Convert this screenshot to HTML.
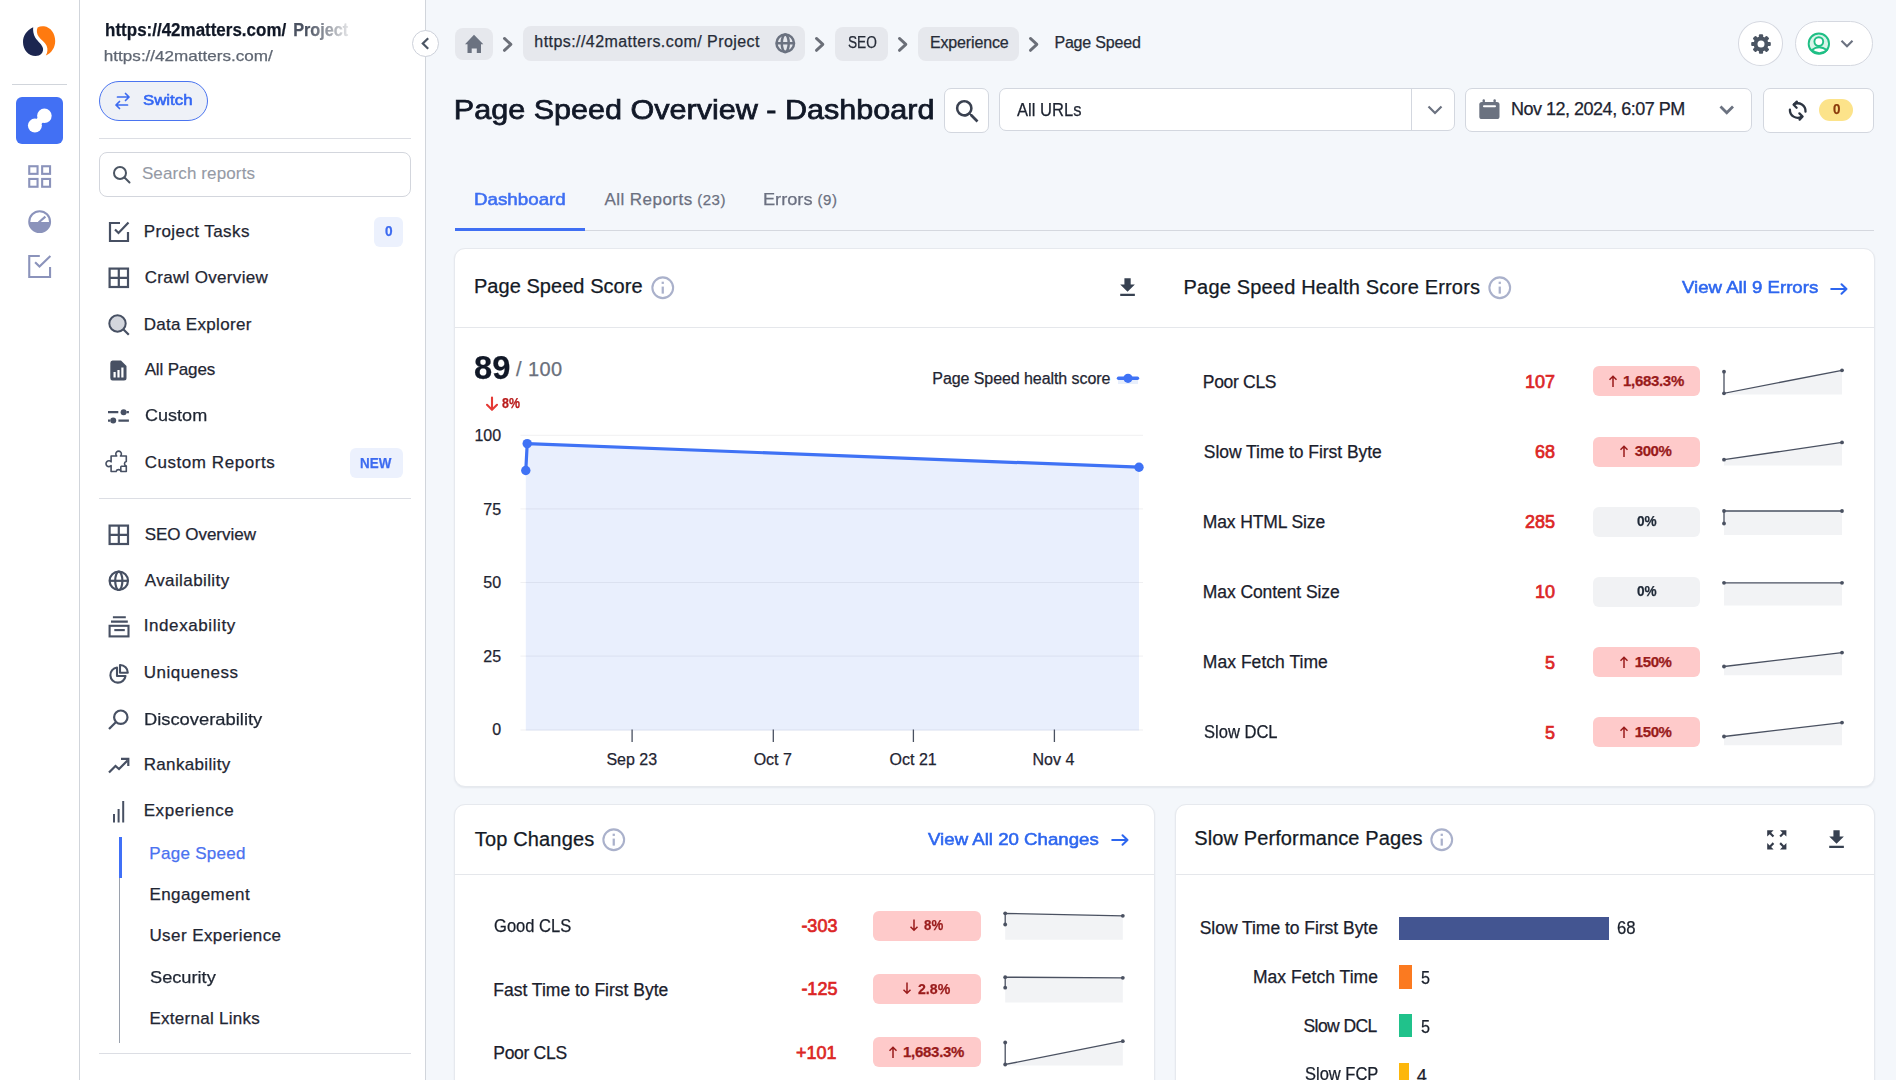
<!DOCTYPE html>
<html><head><meta charset="utf-8"><title>Page Speed Overview - Dashboard</title><style>
*{box-sizing:border-box;margin:0;padding:0}
html,body{width:1896px;height:1080px;overflow:hidden}
body{font-family:"Liberation Sans",sans-serif;background:#f4f7fb;color:#1d2433;position:relative}
.abs{position:absolute}
.ico{position:absolute;overflow:visible}
.t{position:absolute;white-space:nowrap;line-height:1;-webkit-text-stroke:0.25px currentColor}
.hr{position:absolute;height:1px;background:#dfe1e7}
.card{position:absolute;background:#fff;border:1px solid #e6e9ee;border-radius:11px;box-shadow:0 1px 2px rgba(20,30,50,.07)}
.chip{position:absolute;background:#e6e8ed;border-radius:8px}
.box{position:absolute;background:#fff;border:1px solid #d3d7df;border-radius:7px}
</style></head><body>
<div class="abs" style="left:0;top:0;width:80px;height:1080px;background:#fff;border-right:1px solid #d1d5db"></div>
<svg class="ico" style="left:0;top:0" width="80" height="80" viewBox="0 0 80 80">
  <path d="M33.2 27.3 C26.5 30.5 23 36 23 42 C23 50 28.5 56 35.5 56 C40.5 56 43.6 52.5 43 48.5 C42.4 44.5 37.6 41.5 35.2 37.5 C33.4 34.3 32.8 30.5 33.2 27.3Z" fill="#1c2650"/>
  <path d="M37.6 27.4 C39.6 26.3 41.8 26 44 26.3 C50.8 27.3 55.2 33.5 55.2 41 C55.2 47.6 51.4 53.2 45.8 55.6 C47.6 52.6 48 49 46.6 45.8 C45 42.4 41 40 38.6 36.6 C36.8 33.8 36.2 30 37.6 27.4Z" fill="#ff7a0f"/>
</svg>
<div class="hr" style="left:12px;top:84px;width:55px;background:#d1d5db"></div>
<div class="abs" style="left:16px;top:97px;width:47px;height:47px;border-radius:6px;background:#4270f4"></div>
<svg class="ico" style="left:0;top:0" width="80" height="160" viewBox="0 0 80 160">
  <circle cx="34.9" cy="125.6" r="7" fill="#fff"/><circle cx="44.4" cy="115.8" r="7.3" fill="#fff"/>
  <path d="M32.4 123.2 L41.9 113.4 L46.9 118.2 L37.4 128Z" fill="#fff"/>
</svg>
<svg class="ico" style="left:0;top:0" width="80" height="300" viewBox="0 0 80 300" fill="none" stroke="#8b93bb" stroke-width="2.1">
  <rect x="29.25" y="166.25" width="8.3" height="7.6"/><rect x="42.15" y="166.25" width="7.9" height="7.6"/>
  <rect x="29.25" y="178.95" width="8.3" height="7.8"/><rect x="42.15" y="178.95" width="7.9" height="7.8"/>
  <circle cx="39.65" cy="221.65" r="10.4"/>
  <path d="M29.2 221.9 A10.45 10.45 0 0 0 50.1 221.9Z" fill="#8b93bb" stroke="none"/>
  <path d="M38.6 222.5 L45.4 216.6"/>
  <path d="M39.8 256.05 H29.25 V277.05 H50.05 V267"/><path d="M35.1 262.2 L39.5 266.6 L50.4 256"/>
</svg>
<div class="abs" style="left:80px;top:0;width:346px;height:1080px;background:#fff;border-right:1px solid #d1d5db"></div>
<div class="abs" style="left:99px;top:81px;width:109px;height:40px;border:1.5px solid #4a74f0;border-radius:20px;background:#eef1f7"></div>
<svg class="ico" style="left:114px;top:92px" width="17" height="18" viewBox="0 0 17 18" fill="none" stroke="#3d6bf0" stroke-width="1.7" stroke-linecap="round" stroke-linejoin="round">
  <path d="M3.5 5 H15 M11.5 1.5 L15 5 L11.5 8.5"/><path d="M13.5 13 H2 M5.5 9.5 L2 13 L5.5 16.5"/>
</svg>
<div class="hr" style="left:99px;top:138px;width:312px;background:#dcdee4"></div>
<div class="abs" style="left:99px;top:152px;width:312px;height:45px;border:1px solid #d3d6dd;border-radius:8px;background:#fff"></div>
<svg class="ico" style="left:112px;top:165px" width="20" height="19" viewBox="0 0 20 19" fill="none" stroke="#4b5563" stroke-width="2" stroke-linecap="round">
  <circle cx="8" cy="8" r="6"/><path d="M12.5 12.5 L17.5 17.5"/>
</svg>
<svg class="ico" style="left:107.5px;top:220.5px" width="22" height="22" viewBox="0 0 22 22" fill="none" stroke="#475063" stroke-width="2.2"><path d="M12 2 H2 V20 H20 V11"/><path d="M7 8.5 L10.5 12 L20.5 1.5"/></svg>
<svg class="ico" style="left:107.5px;top:266.5px" width="22" height="22" viewBox="0 0 22 22" fill="none" stroke="#475063" stroke-width="2.2"><rect x="1.6" y="1.6" width="18.4" height="18.4"/><path d="M10.8 1.6 V20 M1.6 10.8 H20"/></svg>
<svg class="ico" style="left:107.5px;top:523.5px" width="22" height="22" viewBox="0 0 22 22" fill="none" stroke="#475063" stroke-width="2.2"><rect x="1.6" y="1.6" width="18.4" height="18.4"/><path d="M10.8 1.6 V20 M1.6 10.8 H20"/></svg>
<svg class="ico" style="left:107.5px;top:313.5px" width="22" height="22" viewBox="0 0 22 22"><circle cx="9.5" cy="9.5" r="8.2" fill="#d3d6dd" stroke="#475063" stroke-width="2"/><path d="M15.5 15.5 L20.8 20.8" stroke="#475063" stroke-width="2.2"/></svg>
<svg class="ico" style="left:110px;top:360px" width="17" height="21" viewBox="0 0 17 21"><path d="M2.5 0.5 H11 L16.5 6 V18 Q16.5 20.5 14 20.5 H2.5 Q0.3 20.5 0.3 18 V3 Q0.3 0.5 2.5 0.5Z" fill="#475063"/><rect x="3.5" y="12" width="2.2" height="5.5" fill="#fff"/><rect x="7.4" y="10" width="2.2" height="7.5" fill="#fff"/><rect x="11.3" y="7.5" width="2.2" height="10" fill="#fff"/></svg>
<svg class="ico" style="left:0;top:0" width="140" height="500" viewBox="0 0 140 500"><g stroke="#475063" stroke-width="2.2" fill="none"><path d="M108 412.2 H118.3 M126.5 412.2 H128.9 M108 420.6 H110 M118.4 420.6 H128.9"/></g><circle cx="123.6" cy="412.2" r="3" fill="#475063"/><circle cx="113.2" cy="420.6" r="3" fill="#475063"/><g stroke="#475063" stroke-width="1.6" fill="none" stroke-linejoin="round"><path d="M111.1 456 H116.75 A2.8 2.8 0 1 1 120.45 456 H126.3 V461.45 A2.3 2.3 0 0 0 126.3 465.95 V471.5 H121.1 A2.6 2.6 0 0 0 116.1 471.5 H111.1 V465.6 A2.9 2.9 0 1 1 111.1 461.8 Z"/><path d="M120.8 466.2 H126.3 M120.8 466.2 V471.5"/></g></svg>
<div class="hr" style="left:99px;top:498px;width:312px;background:#dcdee4"></div>
<svg class="ico" style="left:107.5px;top:569.5px" width="22" height="22" viewBox="0 0 22 22" fill="none" stroke="#475063" stroke-width="2.2"><circle cx="10.8" cy="10.8" r="9.2"/><ellipse cx="10.8" cy="10.8" rx="3.6" ry="9.2"/><path d="M1.6 10.8 H20"/></svg>
<svg class="ico" style="left:107.5px;top:615.5px" width="22" height="22" viewBox="0 0 22 22" fill="none" stroke="#475063" stroke-width="2.1"><path d="M4.9 1.3 H17.8 M3 5.6 H19.8"/><rect x="1.6" y="9.8" width="18.9" height="10.6"/><path d="M6.3 14.1 H16.8"/></svg>
<svg class="ico" style="left:108.5px;top:663.5px" width="20" height="20" viewBox="0 0 20 20" fill="none" stroke="#475063" stroke-width="2.1" stroke-linejoin="round"><path d="M8 3.5 A7.6 7.6 0 1 0 16.5 12 H8 Z"/><path d="M11 1 A7.6 7.6 0 0 1 18.8 8.8 H11 Z"/></svg>
<svg class="ico" style="left:107.5px;top:708.5px" width="22" height="22" viewBox="0 0 22 22" fill="none" stroke="#475063" stroke-width="2.2"><circle cx="12.8" cy="8.2" r="6.7"/><path d="M7.8 13.2 L1 20"/></svg>
<svg class="ico" style="left:107.5px;top:757px" width="22" height="17" viewBox="0 0 22 17" fill="none" stroke="#475063" stroke-width="2.2"><path d="M1 15.5 L7.5 9 L11 12 L19.5 3.5"/><path d="M13 1.8 H20.3 V9"/></svg>
<svg class="ico" style="left:113px;top:800.5px" width="12" height="22" viewBox="0 0 12 22" fill="#475063"><rect x="0" y="13" width="2" height="8.5"/><rect x="4.6" y="8" width="2" height="13.5"/><rect x="9.2" y="0" width="2" height="21.5"/></svg>
<div class="abs" style="left:118.7px;top:837px;width:1.6px;height:206px;background:#9aa1ad"></div>
<div class="abs" style="left:118.7px;top:837px;width:3.3px;height:41px;background:#4070f7"></div>
<div class="hr" style="left:99px;top:1053px;width:312px;background:#dcdee4"></div>
<div class="abs" style="left:374px;top:217px;width:29px;height:30px;border-radius:6px;background:#ecf1fd"></div>
<div class="abs" style="left:350px;top:448px;width:53px;height:30px;border-radius:6px;background:#ecf1fd"></div>
<div class="abs" style="left:412px;top:30px;width:27px;height:27px;border-radius:50%;background:#fff;border:1px solid #cdd1da"></div>
<svg class="ico" style="left:420px;top:36px" width="12" height="16" viewBox="0 0 12 16" fill="none" stroke="#4b5563" stroke-width="2.2"><path d="M8.2 2.2 L2.8 7.5 L8.2 12.8"/></svg>
<div class="chip" style="left:455.3px;top:28px;width:37.5px;height:31.8px"></div>
<svg class="ico" style="left:0;top:0" width="600" height="70" viewBox="0 0 600 70"><path d="M474 34.8 L483.3 44.2 H481 V53.1 H476.8 V48.6 H471.7 V53.1 H467.5 V44.2 H465 Z" fill="#6b7280"/></svg>
<svg class="ico" style="left:502.4px;top:35.5px" width="12" height="17" viewBox="0 0 12 17" fill="none" stroke="#6b6f78" stroke-width="2.8" stroke-linecap="round" stroke-linejoin="round"><path d="M2.4 2.4 L8.9 8.4 L2.4 14.4"/></svg>
<svg class="ico" style="left:814.2px;top:35.5px" width="12" height="17" viewBox="0 0 12 17" fill="none" stroke="#6b6f78" stroke-width="2.8" stroke-linecap="round" stroke-linejoin="round"><path d="M2.4 2.4 L8.9 8.4 L2.4 14.4"/></svg>
<svg class="ico" style="left:897.3px;top:35.5px" width="12" height="17" viewBox="0 0 12 17" fill="none" stroke="#6b6f78" stroke-width="2.8" stroke-linecap="round" stroke-linejoin="round"><path d="M2.4 2.4 L8.9 8.4 L2.4 14.4"/></svg>
<svg class="ico" style="left:1028.3px;top:35.5px" width="12" height="17" viewBox="0 0 12 17" fill="none" stroke="#6b6f78" stroke-width="2.8" stroke-linecap="round" stroke-linejoin="round"><path d="M2.4 2.4 L8.9 8.4 L2.4 14.4"/></svg>
<div class="chip" style="left:523px;top:26px;width:282px;height:35px"></div>
<svg class="ico" style="left:775px;top:32.7px" width="20.5" height="20.5" viewBox="0 0 20 20" fill="none" stroke="#6b7280" stroke-width="2.4"><circle cx="10" cy="10" r="8.6"/><ellipse cx="10" cy="10" rx="3.4" ry="8.6"/><path d="M1.4 10 H18.6"/></svg>
<div class="chip" style="left:835px;top:27px;width:53px;height:33.5px"></div>
<div class="chip" style="left:918px;top:27px;width:101px;height:33.5px"></div>
<div class="abs" style="left:1738.3px;top:21.2px;width:45.1px;height:44.5px;border-radius:50%;background:#fff;border:1px solid #d5d8e0"></div>
<svg class="ico" style="left:1748.7px;top:31.5px" width="24" height="24" viewBox="0 0 24 24"><g fill="#4b5563"><rect x="9.9" y="2.2" width="4.2" height="5" rx="1" transform="rotate(0 12 12)"/><rect x="9.9" y="2.2" width="4.2" height="5" rx="1" transform="rotate(45 12 12)"/><rect x="9.9" y="2.2" width="4.2" height="5" rx="1" transform="rotate(90 12 12)"/><rect x="9.9" y="2.2" width="4.2" height="5" rx="1" transform="rotate(135 12 12)"/><rect x="9.9" y="2.2" width="4.2" height="5" rx="1" transform="rotate(180 12 12)"/><rect x="9.9" y="2.2" width="4.2" height="5" rx="1" transform="rotate(225 12 12)"/><rect x="9.9" y="2.2" width="4.2" height="5" rx="1" transform="rotate(270 12 12)"/><rect x="9.9" y="2.2" width="4.2" height="5" rx="1" transform="rotate(315 12 12)"/><circle cx="12" cy="12" r="7.4"/></g><circle cx="12" cy="12" r="3.5" fill="#fff"/></svg>
<div class="abs" style="left:1794.5px;top:21.2px;width:78.7px;height:44.5px;border-radius:23px;background:#fff;border:1px solid #d5d8e0"></div>
<svg class="ico" style="left:0;top:0" width="1896" height="80" viewBox="0 0 1896 80"><circle cx="1818.85" cy="43.7" r="10.2" fill="#d9f4e9" stroke="#1fbf85" stroke-width="1.9"/><path d="M1811.9 50 Q1819 44.6 1826.9 50 A10.2 10.2 0 0 1 1811.9 50 Z" fill="#fff" stroke="#1fbf85" stroke-width="1.9"/><circle cx="1818.8" cy="41.6" r="4.4" fill="#fff" stroke="#1fbf85" stroke-width="1.9"/></svg>
<svg class="ico" style="left:1840px;top:39px" width="14" height="10" viewBox="0 0 14 10" fill="none" stroke="#6b7280" stroke-width="2.1"><path d="M1.5 1.8 L7 7.3 L12.5 1.8"/></svg>
<div class="box" style="left:944px;top:88px;width:45px;height:45px;border-radius:7px"></div>
<svg class="ico" style="left:951.6px;top:95.6px" width="31" height="31" viewBox="0 0 24 24"><path fill="#3a4150" d="M15.5 14h-.79l-.28-.27A6.471 6.471 0 0 0 16 9.5 6.5 6.5 0 1 0 9.5 16c1.61 0 3.09-.59 4.23-1.57l.27.28v.79l5 4.99L20.49 19l-4.99-5zm-6 0C7.01 14 5 11.99 5 9.5S7.01 5 9.5 5 14 7.01 14 9.5 11.99 14 9.5 14z"/></svg>
<div class="box" style="left:999px;top:88px;width:456px;height:43px"></div>
<div class="abs" style="left:1411px;top:89px;width:1px;height:41.5px;background:#d3d7df"></div>
<svg class="ico" style="left:1426.5px;top:104.5px" width="16" height="10" viewBox="0 0 16 10" fill="none" stroke="#6b7280" stroke-width="2.2"><path d="M1.5 1.5 L8 8 L14.5 1.5"/></svg>
<div class="box" style="left:1465px;top:88px;width:287px;height:44px"></div>
<svg class="ico" style="left:1478.7px;top:98.8px" width="21" height="20" viewBox="0 0 21 20"><rect x="0.3" y="3" width="20.2" height="17" rx="2.6" fill="#6b7280"/><rect x="3.6" y="0.3" width="2.3" height="5" rx="1" fill="#6b7280"/><rect x="14.5" y="0.3" width="2.3" height="5" rx="1" fill="#6b7280"/><rect x="4" y="6.3" width="13" height="1.9" rx=".9" fill="#fff"/></svg>
<svg class="ico" style="left:1718.5px;top:105px" width="15.5" height="10" viewBox="0 0 15.5 10" fill="none" stroke="#6b7280" stroke-width="2.8"><path d="M1.5 1.5 L7.75 7.8 L14 1.5"/></svg>
<div class="box" style="left:1762.5px;top:88px;width:111px;height:45px"></div>
<svg class="ico" style="left:1785px;top:98px" width="26" height="26" viewBox="0 0 26 26" fill="none" stroke="#2d3542" stroke-width="2.3" stroke-linecap="round" stroke-linejoin="round"><path d="M9 6.3 A7.8 7.8 0 0 1 20.5 13.6"/><path d="M11.8 3.6 L8.6 6.8 L11.6 9.8"/><path d="M4.9 11.7 A7.8 7.8 0 0 0 16.5 18.8"/><path d="M14.4 15.4 L17.6 18.5 L14.6 21.6"/></svg>
<div class="abs" style="left:1819px;top:99.3px;width:34.3px;height:21.7px;border-radius:11px;background:#fce38a"></div>
<div class="abs" style="left:455px;top:230px;width:1419px;height:1px;background:#d5d8df"></div>
<div class="abs" style="left:455px;top:228px;width:130px;height:2.5px;background:#3f6ff3"></div>
<div class="card" style="left:454px;top:248px;width:1421px;height:539px"></div>
<div class="abs" style="left:455px;top:327px;width:1419px;height:1px;background:#e5e7eb"></div>
<svg class="ico" style="left:650.85px;top:275.80px" width="23.5" height="23.5" viewBox="0 0 24 24" fill="none" stroke="#aab1cb" stroke-width="2.1"><circle cx="12" cy="12" r="10.6"/><path d="M12 10.8 V18" stroke-width="2.3"/><path d="M10.85 5.8 H13.15 V8.1 H10.85Z" fill="#aab1cb" stroke="none"/></svg>
<svg class="ico" style="left:1115px;top:275px" width="25.1" height="25.1" viewBox="0 0 24 24"><path fill="#374151" d="M19 9h-4V3H9v6H5l7 7 7-7zM5 18v2h14v-2H5z"/></svg>
<svg class="ico" style="left:484px;top:396px" width="16" height="16" viewBox="0 0 16 16" fill="none" stroke="#e53935" stroke-width="2.1" stroke-linecap="round" stroke-linejoin="round"><path d="M8 1.5 V13.5 M3 8.8 L8 13.8 L13 8.8"/></svg>
<svg class="ico" style="left:1117px;top:371px" width="22" height="16" viewBox="0 0 22 16"><rect x="1" y="7" width="20" height="6" fill="#e8effc"/><path d="M1.5 7.3 H20.5" stroke="#3f72f5" stroke-width="3.4" stroke-linecap="round"/><circle cx="11" cy="7.3" r="4.6" fill="#3f72f5"/></svg>
<svg class="ico" style="left:0;top:0" width="1896" height="1080" viewBox="0 0 1896 1080">
  <path d="M525.8 470.5 L527.2 443.6 L1139 467.2 L1139 730.5 L525.8 730.5Z" fill="#e9effd"/>
  <path d="M520.5 435.3 H1143 M520.5 508.9 H1143 M520.5 582.5 H1143 M520.5 656.1 H1143 M520.5 730 H1143" stroke="rgba(60,70,90,.08)" stroke-width="1"/>
  <path d="M525.8 470.5 L527.2 443.6 L1139 467.2" fill="none" stroke="#3f72f5" stroke-width="3.2" stroke-linejoin="round"/>
  <circle cx="527.2" cy="443.6" r="4.7" fill="#3f72f5"/><circle cx="525.8" cy="470.5" r="4.7" fill="#3f72f5"/><circle cx="1139" cy="467.2" r="4.7" fill="#3f72f5"/>
  <path d="M632.1 729.6 V742.1 M773.3 729.6 V742.1 M913.4 729.6 V742.1 M1054.4 729.6 V742.1" stroke="#4a5161" stroke-width="1.3"/>
</svg>
<svg class="ico" style="left:1488.10px;top:275.80px" width="23.5" height="23.5" viewBox="0 0 24 24" fill="none" stroke="#aab1cb" stroke-width="2.1"><circle cx="12" cy="12" r="10.6"/><path d="M12 10.8 V18" stroke-width="2.3"/><path d="M10.85 5.8 H13.15 V8.1 H10.85Z" fill="#aab1cb" stroke="none"/></svg>
<svg class="ico" style="left:1830px;top:282.5px" width="18" height="12" viewBox="0 0 18 12" fill="none" stroke="#2d66ef" stroke-width="2" stroke-linecap="round" stroke-linejoin="round"><path d="M1.2 6 H16.5 M11.5 1.2 L16.5 6 L11.5 10.8"/></svg>
<div class="card" style="left:454px;top:804px;width:701px;height:320px"></div>
<div class="abs" style="left:455px;top:874px;width:699px;height:1px;background:#e5e7eb"></div>
<svg class="ico" style="left:601.90px;top:827.90px" width="23.5" height="23.5" viewBox="0 0 24 24" fill="none" stroke="#aab1cb" stroke-width="2.1"><circle cx="12" cy="12" r="10.6"/><path d="M12 10.8 V18" stroke-width="2.3"/><path d="M10.85 5.8 H13.15 V8.1 H10.85Z" fill="#aab1cb" stroke="none"/></svg>
<svg class="ico" style="left:1111px;top:834px" width="18" height="12" viewBox="0 0 18 12" fill="none" stroke="#2d66ef" stroke-width="2" stroke-linecap="round" stroke-linejoin="round"><path d="M1.2 6 H16.5 M11.5 1.2 L16.5 6 L11.5 10.8"/></svg>
<div class="card" style="left:1175px;top:804px;width:700px;height:320px"></div>
<div class="abs" style="left:1176px;top:874px;width:698px;height:1px;background:#e5e7eb"></div>
<svg class="ico" style="left:1430.10px;top:827.90px" width="23.5" height="23.5" viewBox="0 0 24 24" fill="none" stroke="#aab1cb" stroke-width="2.1"><circle cx="12" cy="12" r="10.6"/><path d="M12 10.8 V18" stroke-width="2.3"/><path d="M10.85 5.8 H13.15 V8.1 H10.85Z" fill="#aab1cb" stroke="none"/></svg>
<svg class="ico" style="left:1763.8px;top:826.6px" width="25.6" height="25.6" viewBox="0 0 24 24"><path fill="#343b4a" d="M15 3l2.3 2.3-2.89 2.87 1.42 1.42L18.7 6.7 21 9V3zM3 9l2.3-2.3 2.87 2.89 1.42-1.42L6.7 5.3 9 3H3zm6 12l-2.3-2.3 2.89-2.87-1.42-1.42L5.3 17.3 3 15v6zm12-6l-2.3 2.3-2.87-2.89-1.42 1.42 2.89 2.87L15 21h6z"/></svg>
<svg class="ico" style="left:1823.8px;top:827px" width="25.1" height="25.1" viewBox="0 0 24 24"><path fill="#374151" d="M19 9h-4V3H9v6H5l7 7 7-7zM5 18v2h14v-2H5z"/></svg>
<div class="abs" style="left:1399px;top:916.5px;width:209.6px;height:23.2px;background:#435591"></div>
<div class="abs" style="left:1399px;top:965.3px;width:13.4px;height:23.3px;background:#fb7a20"></div>
<div class="abs" style="left:1399px;top:1014.4px;width:13.4px;height:23.1px;background:#20c28b"></div>
<div class="abs" style="left:1399px;top:1062.8px;width:10.1px;height:23.1px;background:#fdb70b"></div>
<div class="abs" style="left:1593.2px;top:366px;width:106.6px;height:29.7px;border-radius:6px;background:#fecaca"></div>
<svg class="ico" style="left:1608.5px;top:375.3px" width="8" height="12" viewBox="0 0 8 12" fill="none" stroke="#991b1b" stroke-width="1.5"><path d="M4 12 V1.2 M0.5 4.7 L4 1.2 L7.5 4.7"/></svg>
<div class="abs" style="left:1593.2px;top:437px;width:106.6px;height:29.7px;border-radius:6px;background:#fecaca"></div>
<svg class="ico" style="left:1620.3px;top:445.3px" width="8" height="12" viewBox="0 0 8 12" fill="none" stroke="#991b1b" stroke-width="1.5"><path d="M4 12 V1.2 M0.5 4.7 L4 1.2 L7.5 4.7"/></svg>
<div class="abs" style="left:1593.2px;top:507px;width:106.6px;height:29.7px;border-radius:6px;background:#f1f2f4"></div>
<div class="abs" style="left:1593.2px;top:577px;width:106.6px;height:29.7px;border-radius:6px;background:#f1f2f4"></div>
<div class="abs" style="left:1593.2px;top:647px;width:106.6px;height:29.7px;border-radius:6px;background:#fecaca"></div>
<svg class="ico" style="left:1620.3px;top:656.1px" width="8" height="12" viewBox="0 0 8 12" fill="none" stroke="#991b1b" stroke-width="1.5"><path d="M4 12 V1.2 M0.5 4.7 L4 1.2 L7.5 4.7"/></svg>
<div class="abs" style="left:1593.2px;top:717px;width:106.6px;height:29.7px;border-radius:6px;background:#fecaca"></div>
<svg class="ico" style="left:1620.3px;top:726.0px" width="8" height="12" viewBox="0 0 8 12" fill="none" stroke="#991b1b" stroke-width="1.5"><path d="M4 12 V1.2 M0.5 4.7 L4 1.2 L7.5 4.7"/></svg>
<div class="abs" style="left:873px;top:911px;width:108px;height:29.7px;border-radius:6px;background:#fecaca"></div>
<svg class="ico" style="left:909.7px;top:918.8px" width="8" height="12" viewBox="0 0 8 12" fill="none" stroke="#991b1b" stroke-width="1.5"><path d="M4 0.4 V11.2 M0.5 7.7 L4 11.2 L7.5 7.7"/></svg>
<div class="abs" style="left:873px;top:974px;width:108px;height:29.7px;border-radius:6px;background:#fecaca"></div>
<svg class="ico" style="left:903.2px;top:982.4px" width="8" height="12" viewBox="0 0 8 12" fill="none" stroke="#991b1b" stroke-width="1.5"><path d="M4 0.4 V11.2 M0.5 7.7 L4 11.2 L7.5 7.7"/></svg>
<div class="abs" style="left:873px;top:1037px;width:108px;height:29.7px;border-radius:6px;background:#fecaca"></div>
<svg class="ico" style="left:888.5px;top:1045.7px" width="8" height="12" viewBox="0 0 8 12" fill="none" stroke="#991b1b" stroke-width="1.5"><path d="M4 12 V1.2 M0.5 4.7 L4 1.2 L7.5 4.7"/></svg>
<svg class="ico" style="left:0;top:0" width="1896" height="1080" viewBox="0 0 1896 1080"><path d="M1724.0 394.6 L1724.0 371.7 L1724.0 393.3 L1842.0 370.3 L1842.0 394.6Z" fill="#f2f3f5"/><path d="M1724.0 371.7 L1724.0 393.3 L1842.0 370.3" fill="none" stroke="#4a5161" stroke-width="1.3"/><circle cx="1724.0" cy="371.7" r="1.9" fill="#4a5161"/><circle cx="1724.0" cy="393.3" r="1.9" fill="#4a5161"/><circle cx="1842.0" cy="370.3" r="1.9" fill="#4a5161"/><path d="M1724.0 465.5 L1724.0 459.7 L1842.0 442.4 L1842.0 465.5Z" fill="#f2f3f5"/><path d="M1724.0 459.7 L1842.0 442.4" fill="none" stroke="#4a5161" stroke-width="1.3"/><circle cx="1724.0" cy="459.7" r="1.9" fill="#4a5161"/><circle cx="1842.0" cy="442.4" r="1.9" fill="#4a5161"/><path d="M1724.0 535 L1724.0 523.5 L1724.0 511.0 L1842.0 511.0 L1842.0 535Z" fill="#f2f3f5"/><path d="M1724.0 523.5 L1724.0 511.0 L1842.0 511.0" fill="none" stroke="#4a5161" stroke-width="1.3"/><circle cx="1724.0" cy="523.5" r="1.9" fill="#4a5161"/><circle cx="1724.0" cy="511.0" r="1.9" fill="#4a5161"/><circle cx="1842.0" cy="511.0" r="1.9" fill="#4a5161"/><path d="M1724.0 605.4 L1724.0 582.8 L1842.0 582.8 L1842.0 605.4Z" fill="#f2f3f5"/><path d="M1724.0 582.8 L1842.0 582.8" fill="none" stroke="#4a5161" stroke-width="1.3"/><circle cx="1724.0" cy="582.8" r="1.9" fill="#4a5161"/><circle cx="1842.0" cy="582.8" r="1.9" fill="#4a5161"/><path d="M1724.0 675.2 L1724.0 666.5 L1842.0 652.6 L1842.0 675.2Z" fill="#f2f3f5"/><path d="M1724.0 666.5 L1842.0 652.6" fill="none" stroke="#4a5161" stroke-width="1.3"/><circle cx="1724.0" cy="666.5" r="1.9" fill="#4a5161"/><circle cx="1842.0" cy="652.6" r="1.9" fill="#4a5161"/><path d="M1724.0 745.2 L1724.0 736.5 L1842.0 722.6 L1842.0 745.2Z" fill="#f2f3f5"/><path d="M1724.0 736.5 L1842.0 722.6" fill="none" stroke="#4a5161" stroke-width="1.3"/><circle cx="1724.0" cy="736.5" r="1.9" fill="#4a5161"/><circle cx="1842.0" cy="722.6" r="1.9" fill="#4a5161"/><path d="M1005.2 939.7 L1005.2 924.5 L1005.2 913.3 L1122.8 915.8 L1122.8 939.7Z" fill="#f2f3f5"/><path d="M1005.2 924.5 L1005.2 913.3 L1122.8 915.8" fill="none" stroke="#4a5161" stroke-width="1.3"/><circle cx="1005.2" cy="924.5" r="1.9" fill="#4a5161"/><circle cx="1005.2" cy="913.3" r="1.9" fill="#4a5161"/><circle cx="1122.8" cy="915.8" r="1.9" fill="#4a5161"/><path d="M1005.2 1002.5 L1005.2 987.7 L1005.2 977.2 L1122.8 977.8 L1122.8 1002.5Z" fill="#f2f3f5"/><path d="M1005.2 987.7 L1005.2 977.2 L1122.8 977.8" fill="none" stroke="#4a5161" stroke-width="1.3"/><circle cx="1005.2" cy="987.7" r="1.9" fill="#4a5161"/><circle cx="1005.2" cy="977.2" r="1.9" fill="#4a5161"/><circle cx="1122.8" cy="977.8" r="1.9" fill="#4a5161"/><path d="M1005.2 1065.5 L1005.2 1042.5 L1005.2 1064.5 L1122.8 1041.2 L1122.8 1065.5Z" fill="#f2f3f5"/><path d="M1005.2 1042.5 L1005.2 1064.5 L1122.8 1041.2" fill="none" stroke="#4a5161" stroke-width="1.3"/><circle cx="1005.2" cy="1042.5" r="1.9" fill="#4a5161"/><circle cx="1005.2" cy="1064.5" r="1.9" fill="#4a5161"/><circle cx="1122.8" cy="1041.2" r="1.9" fill="#4a5161"/></svg>
<div class="t" style="top:21.29px;font-size:18.8px;color:#111827;font-weight:bold;left:104.50px;transform:scaleX(0.9037);transform-origin:1.00px 0;">https://42matters.com/</div>
<div class="t" style="top:21.29px;font-size:18.8px;color:#4b5261;font-weight:bold;left:292.90px;transform:scaleX(0.8657);transform-origin:1.00px 0;-webkit-mask-image:linear-gradient(90deg,#000 25%,rgba(0,0,0,.15) 100%)">Project</div>
<div class="t" style="top:48.10px;font-size:15px;color:#5f6672;left:104.30px;transform:scaleX(1.1382);transform-origin:1.00px 0;">https://42matters.com/</div>
<div class="t" style="top:91.98px;font-size:15.5px;color:#3366f3;left:143.20px;transform:scaleX(1.0837);transform-origin:0.00px 0;-webkit-text-stroke:0.6px #3366f3;">Switch</div>
<div class="t" style="top:165.31px;font-size:17px;color:#959aa5;letter-spacing:0.123px;left:141.90px;-webkit-text-stroke:0.1px #959aa5;">Search reports</div>
<div class="t" style="top:222.51px;font-size:17px;color:#1f2633;letter-spacing:0.409px;left:143.70px;">Project Tasks</div>
<div class="t" style="top:268.91px;font-size:17px;color:#1f2633;letter-spacing:0.312px;left:144.70px;">Crawl Overview</div>
<div class="t" style="top:315.61px;font-size:17px;color:#1f2633;letter-spacing:0.311px;left:143.70px;">Data Explorer</div>
<div class="t" style="top:361.41px;font-size:17px;color:#1f2633;letter-spacing:-0.165px;left:144.70px;">All Pages</div>
<div class="t" style="top:407.31px;font-size:17px;color:#1f2633;left:144.70px;transform:scaleX(1.0615);transform-origin:0.00px 0;">Custom</div>
<div class="t" style="top:453.91px;font-size:17px;color:#1f2633;letter-spacing:0.552px;left:144.70px;">Custom Reports</div>
<div class="t" style="top:525.61px;font-size:17px;color:#1f2633;letter-spacing:-0.018px;left:144.70px;">SEO Overview</div>
<div class="t" style="top:571.81px;font-size:17px;color:#1f2633;letter-spacing:0.409px;left:144.70px;">Availability</div>
<div class="t" style="top:617.31px;font-size:17px;color:#1f2633;letter-spacing:0.595px;left:143.70px;">Indexability</div>
<div class="t" style="top:663.91px;font-size:17px;color:#1f2633;letter-spacing:0.502px;left:143.70px;">Uniqueness</div>
<div class="t" style="top:710.61px;font-size:17px;color:#1f2633;left:143.70px;transform:scaleX(1.0799);transform-origin:1.00px 0;">Discoverability</div>
<div class="t" style="top:756.41px;font-size:17px;color:#1f2633;letter-spacing:0.345px;left:143.70px;">Rankability</div>
<div class="t" style="top:802.31px;font-size:17px;color:#1f2633;letter-spacing:0.556px;left:143.70px;">Experience</div>
<div class="t" style="top:844.81px;font-size:17px;color:#4b72f0;letter-spacing:0.286px;left:149.30px;">Page Speed</div>
<div class="t" style="top:886.21px;font-size:17px;color:#1f2633;letter-spacing:0.435px;left:149.40px;">Engagement</div>
<div class="t" style="top:926.91px;font-size:17px;color:#1f2633;letter-spacing:0.428px;left:149.40px;">User Experience</div>
<div class="t" style="top:968.91px;font-size:17px;color:#1f2633;left:150.40px;transform:scaleX(1.0709);transform-origin:0.00px 0;">Security</div>
<div class="t" style="top:1009.71px;font-size:17px;color:#1f2633;letter-spacing:0.279px;left:149.40px;">External Links</div>
<div class="t" style="top:224.15px;font-size:14px;color:#3d6bf0;font-weight:bold;left:384.60px;transform:scaleX(0.9750);transform-origin:0.00px 0;">0</div>
<div class="t" style="top:455.30px;font-size:15px;color:#3d6bf0;font-weight:bold;left:360.30px;transform:scaleX(0.8927);transform-origin:1.00px 0;">NEW</div>
<div class="t" style="top:34.36px;font-size:16px;color:#262c38;letter-spacing:0.435px;left:534.30px;">https://42matters.com/ Project</div>
<div class="t" style="top:35.46px;font-size:16px;color:#262c38;left:848.40px;transform:scaleX(0.8547);transform-origin:0.00px 0;">SEO</div>
<div class="t" style="top:35.46px;font-size:16px;color:#262c38;letter-spacing:-0.150px;left:930.00px;">Experience</div>
<div class="t" style="top:35.46px;font-size:16px;color:#262c38;letter-spacing:-0.187px;left:1054.40px;">Page Speed</div>
<div class="t" style="top:94.57px;font-size:28.5px;color:#111827;left:453.80px;transform:scaleX(1.0721);transform-origin:2.00px 0;-webkit-text-stroke:0.75px #111827;">Page Speed Overview - Dashboard</div>
<div class="t" style="top:100.56px;font-size:18px;color:#1d2330;left:1017.20px;transform:scaleX(0.9212);transform-origin:0.00px 0;">All URLs</div>
<div class="t" style="top:99.76px;font-size:18px;color:#1d2330;letter-spacing:-0.496px;left:1511.00px;">Nov 12, 2024, 6:07 PM</div>
<div class="t" style="top:102.43px;font-size:14.5px;color:#8a3b0b;font-weight:bold;left:1832.90px;transform:scaleX(0.9250);transform-origin:0.00px 0;">0</div>
<div class="t" style="top:190.51px;font-size:17px;color:#3f6ff2;left:473.60px;transform:scaleX(1.1051);transform-origin:1.00px 0;-webkit-text-stroke:0.55px #3f6ff2;">Dashboard</div>
<div class="t" style="top:190.51px;font-size:17px;color:#6b7080;letter-spacing:0.466px;left:604.40px;">All Reports</div>
<div class="t" style="top:192.20px;font-size:15px;color:#6b7080;letter-spacing:0.540px;left:697.20px;">(23)</div>
<div class="t" style="top:190.51px;font-size:17px;color:#6b7080;left:763.00px;transform:scaleX(1.0720);transform-origin:1.00px 0;">Errors</div>
<div class="t" style="top:192.20px;font-size:15px;color:#6b7080;letter-spacing:0.531px;left:817.50px;">(9)</div>
<div class="t" style="top:276.47px;font-size:20px;color:#141a26;letter-spacing:0.055px;left:473.90px;">Page Speed Score</div>
<div class="t" style="top:276.67px;font-size:20px;color:#141a26;letter-spacing:0.177px;left:1183.60px;">Page Speed Health Score Errors</div>
<div class="t" style="top:278.61px;font-size:17px;color:#2d66ef;left:1681.60px;transform:scaleX(1.0951);transform-origin:0.00px 0;-webkit-text-stroke:0.55px #2d66ef;">View All 9 Errors</div>
<div class="t" style="top:828.87px;font-size:20px;color:#141a26;letter-spacing:0.154px;left:474.80px;">Top Changes</div>
<div class="t" style="top:830.61px;font-size:17px;color:#2d66ef;left:927.70px;transform:scaleX(1.0976);transform-origin:0.00px 0;-webkit-text-stroke:0.55px #2d66ef;">View All 20 Changes</div>
<div class="t" style="top:828.47px;font-size:20px;color:#141a26;letter-spacing:0.121px;left:1194.20px;">Slow Performance Pages</div>
<div class="t" style="top:351.04px;font-size:33.5px;color:#111827;font-weight:bold;left:474.30px;transform:scaleX(0.9739);transform-origin:1.00px 0;">89</div>
<div class="t" style="top:358.77px;font-size:20px;color:#6a707c;letter-spacing:0.435px;left:516.00px;">/ 100</div>
<div class="t" style="top:395.95px;font-size:14px;color:#b91c1c;font-weight:bold;left:501.60px;transform:scaleX(0.8852);transform-origin:0.00px 0;">8%</div>
<div class="t" style="top:371.16px;font-size:16px;color:#1f2532;letter-spacing:-0.072px;left:932.30px;">Page Speed health score</div>
<div class="t" style="top:428.06px;font-size:16px;color:#1f2532;left:474.40px;">100</div>
<div class="t" style="top:501.66px;font-size:16px;color:#1f2532;left:483.30px;">75</div>
<div class="t" style="top:575.26px;font-size:16px;color:#1f2532;left:483.30px;">50</div>
<div class="t" style="top:648.66px;font-size:16px;color:#1f2532;left:483.30px;">25</div>
<div class="t" style="top:722.46px;font-size:16px;color:#1f2532;left:492.20px;">0</div>
<div class="t" style="top:752.06px;font-size:16px;color:#1f2532;left:606.39px;">Sep 23</div>
<div class="t" style="top:752.06px;font-size:16px;color:#1f2532;left:753.63px;">Oct 7</div>
<div class="t" style="top:752.06px;font-size:16px;color:#1f2532;left:889.58px;">Oct 21</div>
<div class="t" style="top:752.06px;font-size:16px;color:#1f2532;left:1032.55px;">Nov 4</div>
<div class="t" style="top:373.69px;font-size:17.5px;color:#1a202c;letter-spacing:-0.314px;left:1202.80px;">Poor CLS</div>
<div class="t" style="top:373.26px;font-size:18px;color:#dc2626;left:1525.08px;-webkit-text-stroke:0.7px #dc2626;">107</div>
<div class="t" style="top:443.69px;font-size:17.5px;color:#1a202c;letter-spacing:-0.042px;left:1203.80px;">Slow Time to First Byte</div>
<div class="t" style="top:443.26px;font-size:18px;color:#dc2626;left:1535.09px;-webkit-text-stroke:0.7px #dc2626;">68</div>
<div class="t" style="top:513.79px;font-size:17.5px;color:#1a202c;letter-spacing:-0.119px;left:1202.80px;">Max HTML Size</div>
<div class="t" style="top:513.36px;font-size:18px;color:#dc2626;left:1525.08px;-webkit-text-stroke:0.7px #dc2626;">285</div>
<div class="t" style="top:583.79px;font-size:17.5px;color:#1a202c;letter-spacing:-0.079px;left:1202.80px;">Max Content Size</div>
<div class="t" style="top:583.36px;font-size:18px;color:#dc2626;left:1535.09px;-webkit-text-stroke:0.7px #dc2626;">10</div>
<div class="t" style="top:654.39px;font-size:17.5px;color:#1a202c;letter-spacing:0.042px;left:1202.80px;">Max Fetch Time</div>
<div class="t" style="top:653.96px;font-size:18px;color:#dc2626;left:1545.10px;-webkit-text-stroke:0.7px #dc2626;">5</div>
<div class="t" style="top:724.19px;font-size:17.5px;color:#1a202c;left:1203.80px;transform:scaleX(0.9453);transform-origin:0.00px 0;">Slow DCL</div>
<div class="t" style="top:723.76px;font-size:18px;color:#dc2626;left:1545.10px;-webkit-text-stroke:0.7px #dc2626;">5</div>
<div class="t" style="top:918.09px;font-size:17.5px;color:#1a202c;left:494.30px;transform:scaleX(0.9464);transform-origin:0.00px 0;">Good CLS</div>
<div class="t" style="top:916.66px;font-size:18px;color:#dc2626;left:801.38px;-webkit-text-stroke:0.7px #dc2626;">-303</div>
<div class="t" style="top:981.79px;font-size:17.5px;color:#1a202c;letter-spacing:-0.001px;left:493.30px;">Fast Time to First Byte</div>
<div class="t" style="top:980.36px;font-size:18px;color:#dc2626;left:801.38px;-webkit-text-stroke:0.7px #dc2626;">-125</div>
<div class="t" style="top:1045.09px;font-size:17.5px;color:#1a202c;letter-spacing:-0.300px;left:493.30px;">Poor CLS</div>
<div class="t" style="top:1043.66px;font-size:18px;color:#dc2626;left:795.97px;-webkit-text-stroke:0.7px #dc2626;">+101</div>
<div class="t" style="top:919.69px;font-size:17.5px;color:#1a202c;letter-spacing:-0.032px;left:1199.70px;">Slow Time to First Byte</div>
<div class="t" style="top:968.69px;font-size:17.5px;color:#1a202c;letter-spacing:0.042px;left:1252.90px;">Max Fetch Time</div>
<div class="t" style="top:1017.59px;font-size:17.5px;color:#1a202c;letter-spacing:-0.581px;left:1303.50px;">Slow DCL</div>
<div class="t" style="top:1066.49px;font-size:17.5px;color:#1a202c;left:1304.80px;transform:scaleX(0.9427);transform-origin:0.00px 0;">Slow FCP</div>
<div class="t" style="top:919.39px;font-size:18.2px;color:#1a202c;left:1616.70px;transform:scaleX(0.9197);transform-origin:0.00px 0;">68</div>
<div class="t" style="top:968.59px;font-size:18.2px;color:#1a202c;left:1421.20px;transform:scaleX(0.8900);transform-origin:0.00px 0;">5</div>
<div class="t" style="top:1017.59px;font-size:18.2px;color:#1a202c;left:1421.20px;transform:scaleX(0.8900);transform-origin:0.00px 0;">5</div>
<div class="t" style="top:1066.59px;font-size:18.2px;color:#1a202c;left:1416.70px;">4</div>
<div class="t" style="top:373.40px;font-size:15px;color:#991b1b;font-weight:bold;letter-spacing:-0.307px;left:1623.00px;">1,683.3%</div>
<div class="t" style="top:443.40px;font-size:15px;color:#991b1b;font-weight:bold;letter-spacing:-0.476px;left:1634.80px;">300%</div>
<div class="t" style="top:512.50px;font-size:15px;color:#1f2937;font-weight:bold;left:1636.70px;transform:scaleX(0.9090);transform-origin:0.00px 0;">0%</div>
<div class="t" style="top:582.50px;font-size:15px;color:#1f2937;font-weight:bold;left:1636.70px;transform:scaleX(0.9090);transform-origin:0.00px 0;">0%</div>
<div class="t" style="top:654.20px;font-size:15px;color:#991b1b;font-weight:bold;letter-spacing:-0.409px;left:1634.80px;">150%</div>
<div class="t" style="top:724.10px;font-size:15px;color:#991b1b;font-weight:bold;letter-spacing:-0.409px;left:1634.80px;">150%</div>
<div class="t" style="top:916.90px;font-size:15px;color:#991b1b;font-weight:bold;left:924.20px;transform:scaleX(0.8856);transform-origin:0.00px 0;">8%</div>
<div class="t" style="top:980.50px;font-size:15px;color:#991b1b;font-weight:bold;left:917.70px;transform:scaleX(0.9423);transform-origin:0.00px 0;">2.8%</div>
<div class="t" style="top:1043.80px;font-size:15px;color:#991b1b;font-weight:bold;letter-spacing:-0.278px;left:903.00px;">1,683.3%</div>
</body></html>
